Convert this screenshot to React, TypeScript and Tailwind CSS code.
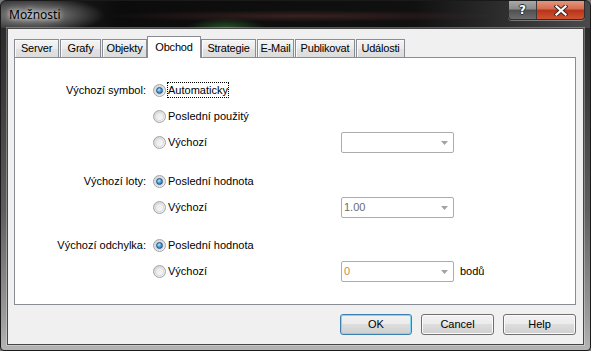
import React from "react";

function Radio({ checked }: { checked?: boolean }) {
  return (
    <span className="relative flex h-[13px] w-[13px] shrink-0 items-center justify-center rounded-full border border-[#a3a4a5] bg-[linear-gradient(135deg,#d2d2d2,#f8f8f8)]">
      <span className="h-[9px] w-[9px] rounded-full bg-[linear-gradient(135deg,#e4e4e4,#fbfbfb)] shadow-[inset_0_0_0_1px_#d9d9d9]" />
      {checked && (
        <span className="absolute left-[2px] top-[2px] h-[7px] w-[7px] rounded-full border border-[#1e4f86] bg-[radial-gradient(circle_at_40%_35%,#b9ecff_0%,#4aa3e0_45%,#1f5fa6_100%)]" />
      )}
    </span>
  );
}

function Combo({ value, color }: { value?: string; color?: string }) {
  return (
    <div className="flex h-[21px] w-[113px] items-center justify-between rounded-[2px] border border-[#acacac] bg-white pl-[2px] pr-[5px]">
      <span className={color}>{value ?? ""}</span>
      <svg width="7" height="4" className="mt-[2px]">
        <path d="M0 0H7L3.5 4Z" fill="#a3a3a3" />
      </svg>
    </div>
  );
}

function Row({
  label,
  checked,
  text,
  focused,
  combo,
  suffix,
}: {
  label?: string;
  checked?: boolean;
  text: string;
  focused?: boolean;
  combo?: React.ReactNode;
  suffix?: string;
}) {
  return (
    <div className="flex h-[26px] items-center">
      <div className="w-[131px] text-right">{label ?? ""}</div>
      <div className="ml-[7px] flex w-[188px] items-center">
        <Radio checked={checked} />
        <span
          className={
            focused
              ? "ml-[1px] border border-dotted border-black leading-[14px]"
              : "ml-[1px] border border-transparent leading-[14px]"
          }
        >
          {text}
        </span>
      </div>
      {combo}
      {suffix && <span className="ml-[6px]">{suffix}</span>}
    </div>
  );
}

function Button({ label, primary }: { label: string; primary?: boolean }) {
  return (
    <div
      className={
        primary
          ? "flex h-[21px] w-[72px] items-center justify-center rounded-[3px] border border-[#3c7fb1] bg-[linear-gradient(to_bottom,#f2f2f2_0%,#ebebeb_50%,#dddddd_50%,#cfcfcf_100%)] shadow-[inset_0_0_0_1px_#7fd6f7]"
          : "flex h-[21px] w-[73px] items-center justify-center rounded-[3px] border border-[#707070] bg-[linear-gradient(to_bottom,#f2f2f2_0%,#ebebeb_50%,#dddddd_50%,#cfcfcf_100%)] shadow-[inset_0_0_0_1px_#fbfbfb]"
      }
    >
      {label}
    </div>
  );
}

const tabs: { label: string; cls: string; selected?: boolean }[] = [
  { label: "Server", cls: "w-[45px]" },
  { label: "Grafy", cls: "ml-px w-[41px]" },
  { label: "Objekty", cls: "ml-px w-[45px]" },
  { label: "Obchod", cls: "w-[54px]", selected: true },
  { label: "Strategie", cls: "w-[55px]" },
  { label: "E-Mail", cls: "ml-px w-[37px]" },
  { label: "Publikovat", cls: "ml-px w-[60px]" },
  { label: "Události", cls: "ml-px w-[49px]" },
];

export default function App() {
  return (
    <div className="h-[351px] w-[591px] bg-[#7a7a7a]">
      <div className="flex h-[351px] w-[591px] flex-col overflow-hidden rounded-t-[6px] rounded-b-[4px] border border-[#1a1a1a] bg-[linear-gradient(to_bottom,#242424_0%,#3a3a3a_25%,#5e5e5e_60%,#9a9a9a_90%,#b4b4b4_100%)] font-['Liberation_Sans',Arial,sans-serif] text-[11px] text-black">
        {/* title bar */}
        <div className="flex h-[27px] shrink-0 items-start justify-between bg-[radial-gradient(ellipse_70px_18px_at_34px_14px,rgba(190,190,190,0.75),rgba(190,190,190,0)),radial-gradient(ellipse_40px_10px_at_225px_27px,rgba(60,140,60,0.55),rgba(60,140,60,0)),radial-gradient(ellipse_200px_6px_at_300px_15px,rgba(110,55,55,0.45),rgba(110,55,55,0)),linear-gradient(to_right,#2c2c2c_0%,#0c0c0c_20%,#101010_70%,#333333_88%,#4a4a4a_100%)]">
          <div className="pl-[8px] pt-[5px] font-['Noto_Sans',sans-serif] text-[12px] leading-[17px] text-black [text-shadow:0_0_4px_rgba(255,255,255,0.9),0_0_8px_rgba(255,255,255,0.6)]">
            Možnosti
          </div>
          <div className="mr-[5px] flex h-[19px] overflow-hidden rounded-b-[4px] border border-t-0 border-[#2e2e2e] shadow-[0_1px_0_rgba(255,255,255,0.35)]">
            <div className="flex w-[28px] items-center justify-center border-r border-[#3a3a3a] bg-[linear-gradient(to_bottom,#a9a9a9_0%,#8a8a8a_45%,#4f4f4f_50%,#6c6c6c_100%)] font-['DejaVu_Sans',sans-serif] text-[12px] font-bold leading-none text-white [text-shadow:0_0_1px_#222,1px_0_0_#333,-1px_0_0_#333,0_1px_0_#333,0_-1px_0_#333]">
              ?
            </div>
            <div className="flex w-[47px] items-center justify-center bg-[linear-gradient(to_bottom,#e2977f_0%,#d46a4f_45%,#b8321a_50%,#d0532f_100%)]">
              <svg width="14" height="11" viewBox="0 0 14 11">
                <path d="M2.5 1.5L11.5 9.5M11.5 1.5L2.5 9.5" stroke="#3a2a2a" strokeWidth="4.2" strokeLinecap="square" />
                <path d="M2.5 1.5L11.5 9.5M11.5 1.5L2.5 9.5" stroke="#ffffff" strokeWidth="2.2" strokeLinecap="square" />
              </svg>
            </div>
          </div>
        </div>

        {/* body */}
        <div className="flex flex-1 px-[6px] pb-[6px]">
          <div className="flex flex-1 flex-col border border-[#474747] bg-[#f0f0f0] pb-[9px] pl-[6px] pr-[7px] pt-[7px] shadow-[0_0_0_1px_rgba(255,255,255,0.3)]">
            <div className="flex h-[21px] items-end tracking-[-0.2px]">
              {tabs.map((t) => (
                <div
                  key={t.label}
                  className={
                    t.selected
                      ? `relative z-10 -mb-px flex h-[22px] items-center justify-center border border-b-0 border-[#898c95] bg-white ${t.cls}`
                      : `flex h-[18px] items-center justify-center border border-b-0 border-[#898c95] bg-[linear-gradient(to_bottom,#f4f4f4_0%,#ebebeb_50%,#e2e2e2_51%,#dcdcdc_100%)] shadow-[inset_1px_1px_0_#fafafa] ${t.cls}`
                  }
                >
                  {t.label}
                </div>
              ))}
            </div>
            <div className="h-[248px] border border-[#898c95] bg-white pt-[19px]">
              <Row label="Výchozí symbol:" checked focused text="Automaticky" />
              <Row text="Poslední použitý" />
              <Row text="Výchozí" combo={<Combo />} />
              <div className="mt-[13px]">
                <Row label="Výchozí loty:" checked text="Poslední hodnota" />
                <Row text="Výchozí" combo={<Combo value="1.00" color="text-[#6d6d6d]" />} />
              </div>
              <div className="mt-[12px]">
                <Row label="Výchozí odchylka:" checked text="Poslední hodnota" />
                <Row text="Výchozí" combo={<Combo value="0" color="text-[#c98a4e]" />} suffix="bodů" />
              </div>
            </div>
            <div className="mt-[9px] flex justify-end gap-[9px]">
              <Button label="OK" primary />
              <Button label="Cancel" />
              <Button label="Help" />
            </div>
          </div>
        </div>
      </div>
    </div>
  );
}
